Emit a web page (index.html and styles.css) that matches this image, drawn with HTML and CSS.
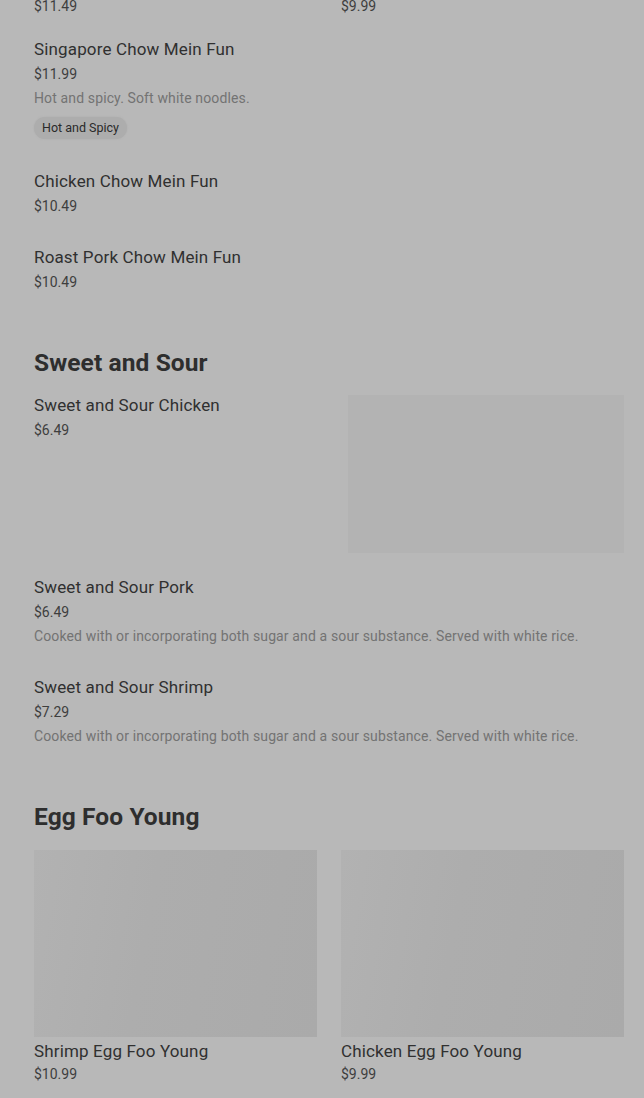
FILE: index.html
```html
<!DOCTYPE html>
<html lang="en">
<head>
  <meta charset="UTF-8">
  <title>Menu</title>
  <link rel="stylesheet" href="styles.css">
</head>
<body>

  <div class="menu">

    <div class="grid grid-tail">
      <div class="card"><div class="price">$11.49</div></div>
      <div class="card"><div class="price">$9.99</div></div>
    </div>

    <div class="item">
      <div class="name">Singapore Chow Mein Fun</div>
      <div class="price">$11.99</div>
      <div class="desc">Hot and spicy. Soft white noodles.</div>
      <span class="tag">Hot and Spicy</span>
    </div>

    <div class="item">
      <div class="name">Chicken Chow Mein Fun</div>
      <div class="price">$10.49</div>
    </div>

    <div class="item">
      <div class="name">Roast Pork Chow Mein Fun</div>
      <div class="price">$10.49</div>
    </div>

    <h2 class="section-title">Sweet and Sour</h2>

    <div class="item item-photo">
      <div class="item-text">
        <div class="name">Sweet and Sour Chicken</div>
        <div class="price">$6.49</div>
      </div>
      <div class="photo photo-faint"></div>
    </div>

    <div class="item">
      <div class="name">Sweet and Sour Pork</div>
      <div class="price">$6.49</div>
      <div class="desc">Cooked with or incorporating both sugar and a sour substance. Served with white rice.</div>
    </div>

    <div class="item">
      <div class="name">Sweet and Sour Shrimp</div>
      <div class="price">$7.29</div>
      <div class="desc">Cooked with or incorporating both sugar and a sour substance. Served with white rice.</div>
    </div>

    <h2 class="section-title">Egg Foo Young</h2>

    <div class="grid">
      <div class="card">
        <div class="photo"></div>
        <div class="name">Shrimp Egg Foo Young</div>
        <div class="price">$10.99</div>
      </div>
      <div class="card">
        <div class="photo"></div>
        <div class="name">Chicken Egg Foo Young</div>
        <div class="price">$9.99</div>
      </div>
    </div>

  </div>

</body>
</html>
```

FILE: styles.css
```css
body {
  margin: 0;
  background-color: #b8b8b8;
  font-family: Roboto, "Liberation Sans", sans-serif;
  color: #333;
}
.menu {
  padding: 0 20px 0 34px;
}
.grid {
  display: grid;
  grid-template-columns: 1fr 1fr;
  column-gap: 24px;
  padding-top: 17px;
}
.grid-tail {
  padding-top: 0;
  margin-top: -4px;
  padding-bottom: 7px;
}
.grid .photo {
  height: 187px;
}
.card .name {
  margin-top: 4px;
}
.card .price {
  margin-top: 3px;
}
.grid-tail .card .price {
  margin-top: 0;
}
.item {
  padding: 16px 0 15px;
}
.item-photo {
  display: flex;
  justify-content: space-between;
  padding-bottom: 8px;
}
.item-photo .photo {
  width: 276px;
  height: 158px;
}
.name {
  font-size: 17px;
  line-height: 20px;
  font-weight: 400;
  color: #303030;
  letter-spacing: 0.15px;
}
.price {
  font-size: 14px;
  line-height: 20px;
  color: #3e3e3e;
  margin-top: 5px;
}
.desc {
  font-size: 14px;
  line-height: 20px;
  color: #737373;
  margin-top: 4px;
  letter-spacing: 0.13px;
}
.tag {
  display: inline-block;
  margin: 9px 0 1px;
  padding: 0 8px;
  height: 22px;
  line-height: 22px;
  border-radius: 11px;
  background-color: #adadad;
  box-shadow: 0 0 2px #adadad;
  font-size: 12.5px;
  color: #2a2a2a;
}
.section-title {
  margin: 40px 0 0;
  font-size: 24.5px;
  line-height: 32px;
  font-weight: 700;
  letter-spacing: 0.1px;
  color: #2e2e2e;
}
.photo {
  background: linear-gradient(100deg, #b2b2b2 0%, #adadad 40%, #aaaaaa 100%);
}
.photo-faint {
  background: #b3b3b3;
}
```
